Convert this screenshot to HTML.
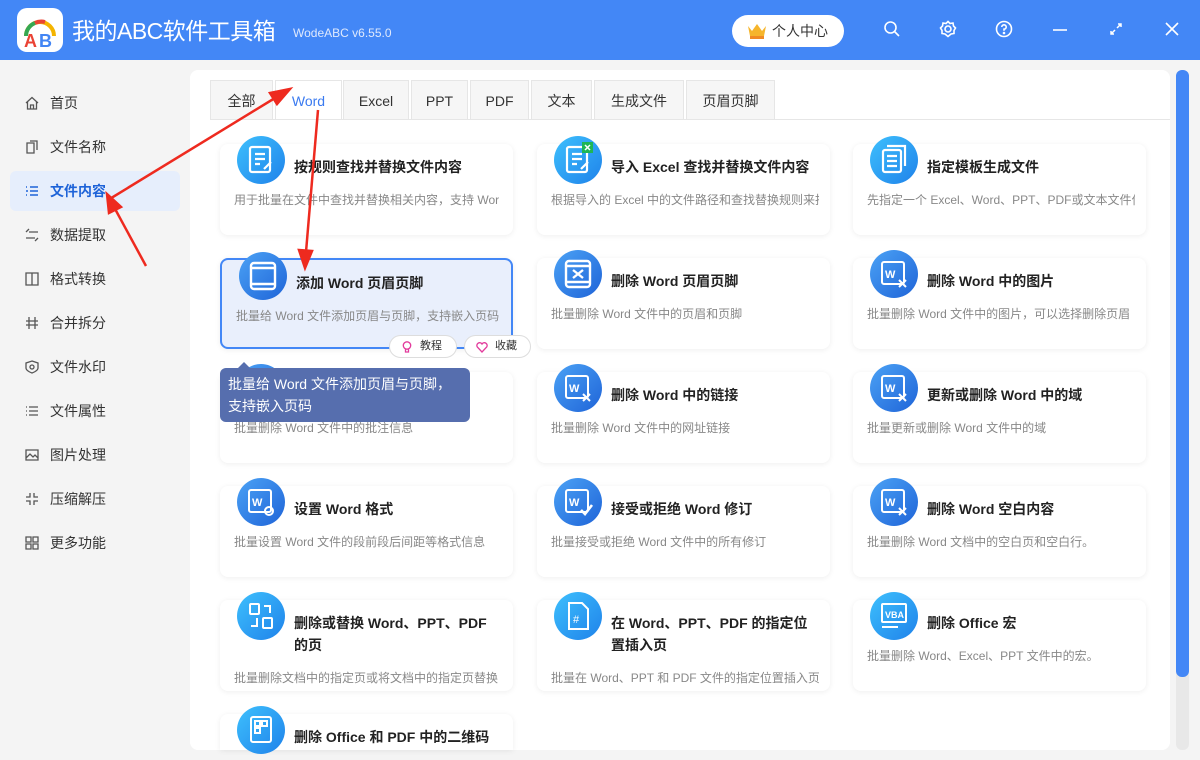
<!DOCTYPE html>
<html><head><meta charset="utf-8"><style>
*{margin:0;padding:0;box-sizing:border-box}
html,body{width:1200px;height:760px;overflow:hidden}
body{background:#f4f4f4;font-family:"Liberation Sans","Noto Sans CJK SC",sans-serif;position:relative}
.hdr{position:absolute;left:0;top:0;width:1200px;height:60px;background:#4387f6}
.logo{position:absolute;left:17px;top:8px;width:46px;height:44px;background:#fff;border-radius:10px}
.ttl{position:absolute;left:72px;top:15px;color:#fff;font-size:23px;line-height:32px;letter-spacing:-0.5px}
.ver{position:absolute;left:293px;top:26px;color:#dfe9fd;font-size:12px}
.user{position:absolute;left:732px;top:15px;width:112px;height:32px;background:#fff;border-radius:16px;font-size:14px;color:#333;line-height:32px;padding-left:40px}
.hi{position:absolute;top:20px}
.nav{position:absolute;left:10px;width:170px;height:40px;font-size:14px;color:#333;line-height:40px;padding-left:40px}
.nav svg{position:absolute;left:15px;top:13px}
.nav.on{background:#e6eefc;color:#1e63d8;font-weight:bold;border-radius:6px}
.main{position:absolute;left:190px;top:70px;width:980px;height:680px;background:#fff;border-radius:8px;overflow:hidden}
.sbt{position:absolute;left:1176px;top:70px;width:13px;height:680px;background:#e8e8e8;border-radius:6px}
.sb{position:absolute;left:1176px;top:70px;width:13px;height:607px;background:#4387f6;border-radius:6px}
.tab{position:absolute;top:80px;height:40px;border:1px solid #e6e6e6;background:#f6f6f6;font-size:14px;color:#333;text-align:center;line-height:40px}
.tab.on{background:#fff;color:#3a7af0;border-bottom-color:#fff}
.card{position:absolute;width:293px;height:91px;background:#fff;border-radius:8px;box-shadow:0 1px 6px rgba(0,0,0,.07)}
.card.sel{background:#e9effc;border:2px solid #4387f6}
.ic{position:absolute;left:17px;top:-8px;width:48px;height:48px;border-radius:50%;background:linear-gradient(135deg,#3ec0fd,#1f82ea)}
.ic.d{background:linear-gradient(135deg,#4ba2f5,#1f64d8)}
.ic svg{position:absolute;left:0;top:0}
.ct{position:absolute;left:74px;top:12px;font-size:14px;font-weight:bold;color:#222;width:205px;line-height:22px}
.cd{position:absolute;left:14px;top:47px;font-size:12px;color:#888;white-space:nowrap;overflow:hidden;width:268px}
.tip{position:absolute;left:220px;top:368px;width:250px;height:54px;background:#566eae;border-radius:6px;color:#fff;font-size:14px;line-height:22px;padding:5px 8px}
.btn{position:absolute;top:335px;height:23px;background:#fff;border:1px solid #ddd;border-radius:12px;font-size:11px;line-height:21px;color:#333;padding-left:30px}
</style></head><body>
<div class="hdr"></div>
<div class="logo"><svg width="46" height="44" viewBox="0 0 46 44"><path d="M9 28 A14 14 0 0 1 37 28" fill="none" stroke="#f4b400" stroke-width="4"/><path d="M9 28 A14 14 0 0 1 18 15" fill="none" stroke="#34a853" stroke-width="4"/><path d="M18 15 A14 14 0 0 1 28 14" fill="none" stroke="#ea4335" stroke-width="4"/><text x="7" y="39" font-size="18" font-weight="bold" fill="#ea4335" font-family="Liberation Sans">A</text><text x="22" y="39" font-size="18" font-weight="bold" fill="#4285f4" font-family="Liberation Sans">B</text></svg></div>
<div class="ttl">我的ABC软件工具箱</div>
<div class="ver">WodeABC v6.55.0</div>
<div class="user"><svg style="position:absolute;left:14px;top:7px" width="22" height="18" viewBox="0 0 22 18"><path d="M2 4 L6 9 L11 2 L16 9 L20 4 L18 14 L4 14Z" fill="#f6b52c"/><rect x="4" y="14" width="14" height="3" fill="#f08a24"/></svg>个人中心</div>
<svg class="hi" style="left:883px" width="18" height="18" viewBox="0 0 18 18" fill="none" stroke="#fff" stroke-width="1.6"><circle cx="7.5" cy="7.5" r="5.5"/><path d="M11.5 11.5 L16 16"/></svg>
<svg class="hi" style="left:939px" width="18" height="18" viewBox="0 0 18 18" fill="none" stroke="#fff" stroke-width="1.6"><circle cx="9" cy="9" r="3"/><path d="M9 1.5 L11 3.5 L14 3 L14.5 6 L16.5 8 L15 10.5 L15 13.5 L12 14 L9 16.5 L6 14 L3 13.5 L3 10.5 L1.5 8 L3.5 6 L4 3 L7 3.5Z"/></svg>
<svg class="hi" style="left:995px" width="18" height="18" viewBox="0 0 18 18" fill="none" stroke="#fff" stroke-width="1.6"><circle cx="9" cy="9" r="7.5"/><path d="M6.8 7 A2.2 2.2 0 1 1 9 9.2 V10.8"/><circle cx="9" cy="13" r=".5" fill="#fff"/></svg>
<svg class="hi" style="left:1051px" width="18" height="18"><path d="M2 10 H16" stroke="#fff" stroke-width="1.6"/></svg>
<svg class="hi" style="left:1107px" width="18" height="18" fill="none" stroke="#fff" stroke-width="1.5"><path d="M4 14 L8 10 M10 8 L14 4 M11 4 H14 V7 M4 11 V14 H7"/></svg>
<svg class="hi" style="left:1163px" width="18" height="18" stroke="#fff" stroke-width="1.6"><path d="M3 3 L15 15 M15 3 L3 15"/></svg>

<div class="nav" style="top:83px"><svg width="14" height="14" fill="none" stroke="#555" stroke-width="1.3"><path d="M1 7 L7 1.5 L13 7 M2.5 6 V13 H11.5 V6 M5.5 13 V9 H8.5 V13"/></svg>首页</div>
<div class="nav" style="top:127px"><svg width="14" height="14" fill="none" stroke="#555" stroke-width="1.3"><path d="M2 3 H9 V13 H2Z M5 1 H12 V10"/></svg>文件名称</div>
<div class="nav on" style="top:171px"><svg width="14" height="14" fill="none" stroke="#1e63d8" stroke-width="1.5"><path d="M5 3 H13 M5 7 H13 M5 11 H13 M1 3 H2 M1 11 H2 M1 7 L3 7"/></svg>文件内容</div>
<div class="nav" style="top:215px"><svg width="14" height="14" fill="none" stroke="#555" stroke-width="1.3"><path d="M4 4 H13 M1 10 H10 M1 4 L4 1 M13 10 L10 13"/></svg>数据提取</div>
<div class="nav" style="top:259px"><svg width="14" height="14" fill="none" stroke="#555" stroke-width="1.3"><path d="M1 1 H13 V13 H1Z M7 1 V13"/></svg>格式转换</div>
<div class="nav" style="top:303px"><svg width="14" height="14" fill="none" stroke="#555" stroke-width="1.3"><path d="M4 1 V13 M10 1 V13 M1 5 H13 M1 9 H13"/></svg>合并拆分</div>
<div class="nav" style="top:347px"><svg width="14" height="14" fill="none" stroke="#555" stroke-width="1.3"><path d="M7 1 L13 3 V8 C13 11 7 13 7 13 C7 13 1 11 1 8 V3Z"/><circle cx="7" cy="7" r="2"/></svg>文件水印</div>
<div class="nav" style="top:391px"><svg width="14" height="14" fill="none" stroke="#555" stroke-width="1.3"><path d="M4 3 H13 M4 7 H13 M4 11 H13 M1 3 H2 M1 7 H2 M1 11 H2"/></svg>文件属性</div>
<div class="nav" style="top:435px"><svg width="14" height="14" fill="none" stroke="#555" stroke-width="1.3"><path d="M1 2 H13 V12 H1Z M1 10 L5 6 L8 9 L10 7 L13 10"/></svg>图片处理</div>
<div class="nav" style="top:479px"><svg width="14" height="14" fill="none" stroke="#555" stroke-width="1.3"><path d="M5 1 V5 H1 M9 1 V5 H13 M5 13 V9 H1 M9 13 V9 H13"/></svg>压缩解压</div>
<div class="nav" style="top:523px"><svg width="14" height="14" fill="none" stroke="#555" stroke-width="1.3"><path d="M1 1 H6 V6 H1Z M8 1 H13 V6 H8Z M1 8 H6 V13 H1Z M8 8 H13 V13 H8Z"/></svg>更多功能</div>

<div class="main">
<div class="tab" style="left:20px;top:10px;width:63px">全部</div>
<div class="tab on" style="left:85px;top:10px;width:67px">Word</div>
<div class="tab" style="left:153px;top:10px;width:66px">Excel</div>
<div class="tab" style="left:221px;top:10px;width:57px">PPT</div>
<div class="tab" style="left:280px;top:10px;width:59px">PDF</div>
<div class="tab" style="left:341px;top:10px;width:61px">文本</div>
<div class="tab" style="left:404px;top:10px;width:90px">生成文件</div>
<div class="tab" style="left:496px;top:10px;width:89px">页眉页脚</div>
<div style="position:absolute;left:20px;top:49px;width:972px;border-top:1px solid #e6e6e6"></div>
</div>
<div class="sbt"></div><div class="sb"></div>

<!-- word doc icon template used via inline svg -->
<div class="card" style="left:220px;top:144px"><div class="ic"><svg width="48" height="48" fill="none" stroke="#fff" stroke-width="2.2"><rect x="13" y="11" width="20" height="25" rx="2"/><path d="M18 18 H28 M18 23 H28 M18 28 H23 M27 33 L34 26"/></svg></div><div class="ct">按规则查找并替换文件内容</div><div class="cd">用于批量在文件中查找并替换相关内容，支持 Wor</div></div>
<div class="card" style="left:537px;top:144px"><div class="ic"><svg width="48" height="48" fill="none" stroke="#fff" stroke-width="2.2"><rect x="13" y="11" width="20" height="25" rx="2"/><path d="M18 18 H28 M18 23 H28 M18 28 H23 M27 33 L34 26"/><rect x="28" y="6" width="11" height="11" fill="#1fb655" stroke="none"/><path d="M31 9 L36 14 M36 9 L31 14" stroke-width="1.5"/></svg></div><div class="ct">导入 Excel 查找并替换文件内容</div><div class="cd">根据导入的 Excel 中的文件路径和查找替换规则来批</div></div>
<div class="card" style="left:853px;top:144px"><div class="ic"><svg width="48" height="48" fill="none" stroke="#fff" stroke-width="2.2"><rect x="13" y="14" width="18" height="22" rx="2"/><path d="M17 10 H35 V30 M17 20 H27 M17 25 H27 M17 30 H27"/></svg></div><div class="ct">指定模板生成文件</div><div class="cd">先指定一个 Excel、Word、PPT、PDF或文本文件作</div></div>

<div class="card sel" style="left:220px;top:258px"><div class="ic d" style="left:17px;top:-8px"><svg width="48" height="48" fill="none" stroke="#fff" stroke-width="2.4"><rect x="12" y="11" width="24" height="26" rx="3"/><path d="M12 16 H36 M12 32 H36"/></svg></div><div class="ct">添加 Word 页眉页脚</div><div class="cd">批量给 Word 文件添加页眉与页脚，支持嵌入页码</div></div>
<div class="card" style="left:537px;top:258px"><div class="ic d"><svg width="48" height="48" fill="none" stroke="#fff" stroke-width="2.4"><rect x="12" y="11" width="24" height="26" rx="3"/><path d="M12 16 H36 M12 32 H36 M19 20 L29 28 M29 20 L19 28"/></svg></div><div class="ct">删除 Word 页眉页脚</div><div class="cd">批量删除 Word 文件中的页眉和页脚</div></div>
<div class="card" style="left:853px;top:258px"><div class="ic d"><svg width="48" height="48" fill="none" stroke="#fff" stroke-width="2"><rect x="12" y="12" width="22" height="22" rx="2"/><text x="15" y="28" font-size="11" font-weight="bold" fill="#fff" stroke="none" font-family="Liberation Sans">W</text><path d="M29 30 L36 37 M36 30 L29 37"/></svg></div><div class="ct">删除 Word 中的图片</div><div class="cd">批量删除 Word 文件中的图片，可以选择删除页眉</div></div>

<div class="card" style="left:220px;top:372px"><div class="ic d"></div><div class="ct">删除 Word 中的批注</div><div class="cd">批量删除 Word 文件中的批注信息</div></div>
<div class="card" style="left:537px;top:372px"><div class="ic d"><svg width="48" height="48" fill="none" stroke="#fff" stroke-width="2"><rect x="12" y="12" width="22" height="22" rx="2"/><text x="15" y="28" font-size="11" font-weight="bold" fill="#fff" stroke="none" font-family="Liberation Sans">W</text><path d="M29 30 L36 37 M36 30 L29 37"/></svg></div><div class="ct">删除 Word 中的链接</div><div class="cd">批量删除 Word 文件中的网址链接</div></div>
<div class="card" style="left:853px;top:372px"><div class="ic d"><svg width="48" height="48" fill="none" stroke="#fff" stroke-width="2"><rect x="12" y="12" width="22" height="22" rx="2"/><text x="15" y="28" font-size="11" font-weight="bold" fill="#fff" stroke="none" font-family="Liberation Sans">W</text><path d="M29 30 L36 37 M36 30 L29 37"/></svg></div><div class="ct">更新或删除 Word 中的域</div><div class="cd">批量更新或删除 Word 文件中的域</div></div>

<div class="card" style="left:220px;top:486px"><div class="ic d"><svg width="48" height="48" fill="none" stroke="#fff" stroke-width="2"><rect x="12" y="12" width="22" height="22" rx="2"/><text x="15" y="28" font-size="11" font-weight="bold" fill="#fff" stroke="none" font-family="Liberation Sans">W</text><circle cx="32" cy="33" r="4"/></svg></div><div class="ct">设置 Word 格式</div><div class="cd">批量设置 Word 文件的段前段后间距等格式信息</div></div>
<div class="card" style="left:537px;top:486px"><div class="ic d"><svg width="48" height="48" fill="none" stroke="#fff" stroke-width="2"><rect x="12" y="12" width="22" height="22" rx="2"/><text x="15" y="28" font-size="11" font-weight="bold" fill="#fff" stroke="none" font-family="Liberation Sans">W</text><path d="M27 32 L31 36 L38 27" stroke-width="2.6"/></svg></div><div class="ct">接受或拒绝 Word 修订</div><div class="cd">批量接受或拒绝 Word 文件中的所有修订</div></div>
<div class="card" style="left:853px;top:486px"><div class="ic d"><svg width="48" height="48" fill="none" stroke="#fff" stroke-width="2"><rect x="12" y="12" width="22" height="22" rx="2"/><text x="15" y="28" font-size="11" font-weight="bold" fill="#fff" stroke="none" font-family="Liberation Sans">W</text><path d="M29 30 L36 37 M36 30 L29 37"/></svg></div><div class="ct">删除 Word 空白内容</div><div class="cd">批量删除 Word 文档中的空白页和空白行。</div></div>

<div class="card" style="left:220px;top:600px"><div class="ic"><svg width="48" height="48" fill="none" stroke="#fff" stroke-width="2"><rect x="13" y="12" width="9" height="10" rx="1"/><rect x="26" y="26" width="9" height="10" rx="1"/><path d="M27 14 H33 V21 M20 26 V34 H14"/></svg></div><div class="ct">删除或替换 Word、PPT、PDF 的页</div><div class="cd" style="top:69px">批量删除文档中的指定页或将文档中的指定页替换</div></div>
<div class="card" style="left:537px;top:600px"><div class="ic"><svg width="48" height="48" fill="none" stroke="#fff" stroke-width="2"><path d="M15 11 H28 L34 17 V37 H15Z"/><text x="19" y="31" font-size="11" fill="#fff" stroke="none" font-family="Liberation Sans">#</text></svg></div><div class="ct">在 Word、PPT、PDF 的指定位置插入页</div><div class="cd" style="top:69px">批量在 Word、PPT 和 PDF 文件的指定位置插入页.</div></div>
<div class="card" style="left:853px;top:600px"><div class="ic"><svg width="48" height="48" fill="none" stroke="#fff" stroke-width="2"><rect x="12" y="12" width="24" height="18" rx="1"/><path d="M12 35 H28"/><text x="15" y="26" font-size="9" font-weight="bold" fill="#fff" stroke="none" font-family="Liberation Sans">VBA</text></svg></div><div class="ct">删除 Office 宏</div><div class="cd">批量删除 Word、Excel、PPT 文件中的宏。</div></div>

<div class="card" style="left:220px;top:714px;height:36px;border-radius:8px 8px 0 0"><div class="ic"><svg width="48" height="48" fill="none" stroke="#fff" stroke-width="2"><rect x="14" y="11" width="20" height="25" rx="2"/><rect x="18" y="15" width="5" height="5"/><rect x="25" y="15" width="5" height="5"/><rect x="18" y="22" width="5" height="5"/></svg></div><div class="ct">删除 Office 和 PDF 中的二维码</div></div>

<svg style="position:absolute;left:0;top:0" width="1200" height="760">
<g stroke="#ee2a1f" stroke-width="2.5" fill="#ee2a1f">
<path d="M108 200 L275 98"/><path d="M290 89 L270 93 L277 104Z"/>
<path d="M146 266 L114 207"/><path d="M107 194 L109 213 L121 207Z"/>
<path d="M318 110 L306 252"/><path d="M305 268 L299 250 L312 251Z"/>
</g>
</svg>

<div class="btn" style="left:389px;width:68px"><svg style="position:absolute;left:12px;top:5px" width="10" height="12" fill="none" stroke="#e23b9c" stroke-width="1.3"><circle cx="5" cy="4.5" r="3.7"/><path d="M3.5 8.5 V11 H6.5 V8.5"/></svg>教程</div>
<div class="btn" style="left:464px;width:67px"><svg style="position:absolute;left:11px;top:6px" width="12" height="11" fill="none" stroke="#e23b9c" stroke-width="1.3"><path d="M6 10 L1.3 5 A2.6 2.6 0 0 1 6 2 A2.6 2.6 0 0 1 10.7 5Z"/></svg>收藏</div>

<div class="tip">批量给 Word 文件添加页眉与页脚，<br>支持嵌入页码</div>
<div style="position:absolute;left:238px;top:362px;width:0;height:0;border-left:6px solid transparent;border-right:6px solid transparent;border-bottom:6px solid #566eae"></div>
</body></html>
